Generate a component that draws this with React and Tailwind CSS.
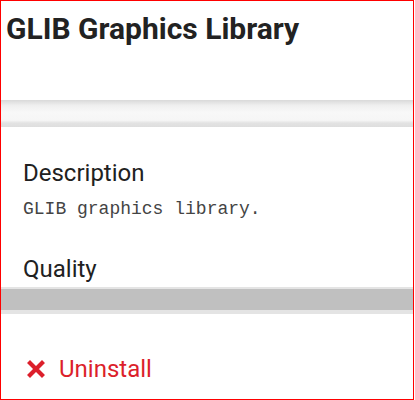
import React from "react";

function CloseIcon() {
  return (
    <svg width="18" height="18" viewBox="0 0 18 18" className="shrink-0">
      <path
        d="M3 3 L15 15 M15 3 L3 15"
        stroke="#dc1f2b"
        strokeWidth="4.2"
        strokeLinecap="square"
      />
    </svg>
  );
}

export default function App() {
  return (
    <div className="w-[414px] h-[400px] border border-[#ff0000] bg-white overflow-hidden font-['Roboto',sans-serif]">
      <div className="h-[99px] pl-[5px] pt-[10px]">
        <h1 className="text-[30px] leading-[36px] font-bold text-[#222222]">
          GLIB Graphics Library
        </h1>
      </div>

      <div className="h-[27px] bg-[linear-gradient(to_bottom,#d9d9d9_0%,#efefef_20%,#f8f8f8_45%,#f6f6f6_75%,#e3e3e3_85%,#dedede_100%)]" />

      <div className="px-[22px] pt-[32px]">
        <h2 className="text-[24px] leading-[28px] text-[#212121]">Description</h2>
        <p className="mt-[12px] text-[18px] leading-[20px] text-[#444444] font-['Liberation_Mono',monospace]">
          GLIB graphics library.
        </p>
        <h2 className="mt-[36px] text-[24px] leading-[28px] text-[#212121]">Quality</h2>
      </div>

      <div className="mt-[4px] border-t-2 border-b-4 border-[#e4e4e4] bg-[#c0c0c0] h-[27px]" />

      <button className="mt-[41px] ml-[26px] flex items-center gap-[14px] text-[24px] leading-[28px] text-[#dc1f2b]">
        <CloseIcon />
        <span>Uninstall</span>
      </button>
    </div>
  );
}
